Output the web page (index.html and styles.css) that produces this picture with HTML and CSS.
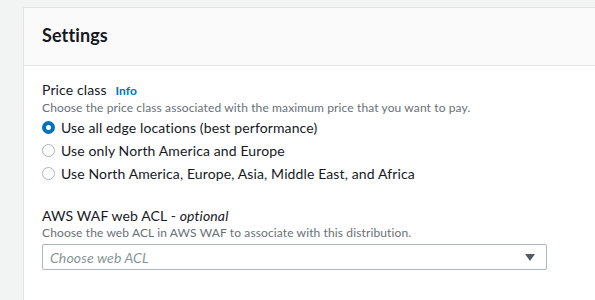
FILE: index.html
```html
<!DOCTYPE html>
<html lang="en">
<head>
    <meta charset="UTF-8">
    <title>Settings</title>
    <link rel="stylesheet" href="styles.css">
</head>
<body>
    <section class="panel">
        <div class="panel-header">
            <h2>Settings</h2>
        </div>
        <div class="panel-body">
            <div class="field">
                <div class="label">Price class <a href="#" class="info">Info</a></div>
                <p class="hint">Choose the price class associated with the maximum price that you want to pay.</p>
                <div class="radios">
                    <label class="radio"><span class="dot checked"></span>Use all edge locations (best performance)</label>
                    <label class="radio"><span class="dot"></span>Use only North America and Europe</label>
                    <label class="radio"><span class="dot"></span>Use North America, Europe, Asia, Middle East, and Africa</label>
                </div>
            </div>

            <div class="field">
                <div class="label">AWS WAF web ACL - <em>optional</em></div>
                <p class="hint">Choose the web ACL in AWS WAF to associate with this distribution.</p>
                <div class="select">
                    <span class="placeholder">Choose web ACL</span>
                    <span class="caret"></span>
                </div>
            </div>

            <div class="field">
                <div class="label">Alternate domain name (CNAME) - <em>optional</em></div>
            </div>
        </div>
    </section>
</body>
</html>
```

FILE: styles.css
```css
body {
    margin: 0;
    padding: 7px 0 0 23px;
    background: #f2f3f3;
    font-family: Lato, 'Liberation Sans', sans-serif;
    letter-spacing: 0.12px;
    color: #16191f;
    overflow: hidden;
}

.panel {
    background: white;
    border: 1px solid #e1e4e4;
    border-right: none;
    height: 400px;
}

.panel-header {
    background: #fafafa;
    border-bottom: 1px solid #e1e4e4;
    height: 54px;
    padding: 0 18px 3px;
    display: flex;
    align-items: center;
}

.panel-header h2 {
    margin: 0;
    font-size: 18px;
    font-weight: 700;
}

.panel-body {
    padding: 15px 18px;
}

.field {
    margin-bottom: 22px;
}

.field + .field {
    margin-bottom: 27px;
}

.label {
    font-size: 14px;
    line-height: 18px;
}

.label em {
    font-style: italic;
}

.info {
    color: #0073bb;
    font-size: 12px;
    font-weight: 700;
    text-decoration: none;
    margin-left: 5px;
}

.hint {
    margin: 0;
    font-size: 12px;
    line-height: 16px;
    color: #687078;
}

.radios {
    display: flex;
    flex-direction: column;
}

.radio {
    display: flex;
    align-items: center;
    gap: 6px;
    font-size: 14px;
    height: 23px;
}

.dot {
    width: 11px;
    height: 11px;
    border: 1px solid #aab7b8;
    border-radius: 50%;
    box-sizing: content-box;
}

.dot.checked {
    width: 5px;
    height: 5px;
    border: 4px solid #0073bb;
}

.select {
    margin-top: 3px;
    width: 485px;
    height: 24px;
    border: 1px solid #aab7b8;
    border-radius: 2px;
    display: flex;
    align-items: center;
    justify-content: space-between;
    padding: 0 11px 0 7px;
}

.placeholder {
    font-size: 14px;
    font-style: italic;
    color: #879596;
}

.caret {
    width: 0;
    height: 0;
    border-left: 5px solid transparent;
    border-right: 5px solid transparent;
    border-top: 7px solid #545b64;
}
```
